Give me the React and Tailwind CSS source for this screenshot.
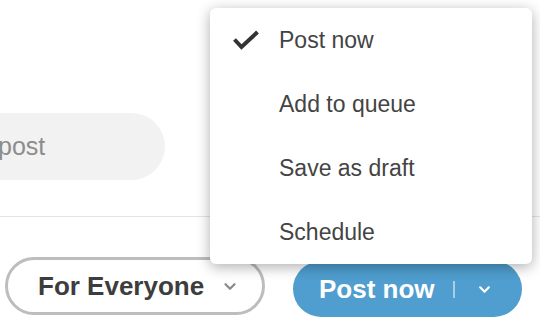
import React from 'react';

const MENU_ITEMS = [
  { label: 'Post now', checked: true },
  { label: 'Add to queue' },
  { label: 'Save as draft' },
  { label: 'Schedule' },
];

function Chevron({ className }) {
  return (
    <svg viewBox="0 0 12 8" className={className} fill="none" stroke="currentColor" strokeWidth="2" strokeLinecap="round" strokeLinejoin="round">
      <path d="M2 2l4 4 4-4" />
    </svg>
  );
}

function CheckMark() {
  return (
    <svg viewBox="0 0 26 20" className="w-[26px] h-[20px] text-[#333]" fill="none" stroke="currentColor" strokeWidth="4" strokeLinejoin="miter">
      <path d="M1.5 9.5l7 7.5L24.5 2" />
    </svg>
  );
}

export default function App() {
  return (
    <div className="relative w-[540px] h-[333px] overflow-hidden bg-white font-['Liberation_Sans',Arial,sans-serif]">
      {/* composer area */}
      <div className="h-[217px] pt-[113px] border-b border-[#e4e4e4]">
        <div className="-ml-[40px] w-[205px] h-[67px] rounded-full bg-[#f2f2f2] flex items-center pl-[38px] text-[25px] text-[#8c8c8c]">
          post
        </div>
      </div>

      {/* footer actions */}
      <div className="flex items-start pt-[40px] pl-[5px]">
        <button className="w-[260px] h-[58px] rounded-full border-[3px] border-[#bdbdbd] bg-white flex items-center pl-[30px] text-[26px] font-bold text-[#3d3d3d]">
          <span>For Everyone</span>
          <Chevron className="ml-[19px] w-[14px] h-[9px] text-[#8a8a8a]" />
        </button>
        <button className="ml-[28px] mt-[4px] w-[229px] h-[56px] rounded-full bg-[#4f9ecf] flex items-center pl-[26px] text-[26px] font-bold text-white">
          <span>Post now</span>
          <span className="ml-[18px] w-[2px] h-[17px] bg-white/50" />
          <Chevron className="ml-[23px] w-[13px] h-[9px] text-white" />
        </button>
      </div>

      {/* post options menu */}
      <div className="absolute left-[210px] top-[8px] w-[322px] rounded-[6px] bg-white shadow-[0_3px_14px_rgba(0,0,0,0.32)]">
        {MENU_ITEMS.map((item) => (
          <div key={item.label} className="h-[64px] flex items-center text-[23px] text-[#444]">
            <span className="w-[69px] flex justify-end pr-[20px]">{item.checked && <CheckMark />}</span>
            <span>{item.label}</span>
          </div>
        ))}
      </div>
    </div>
  );
}
